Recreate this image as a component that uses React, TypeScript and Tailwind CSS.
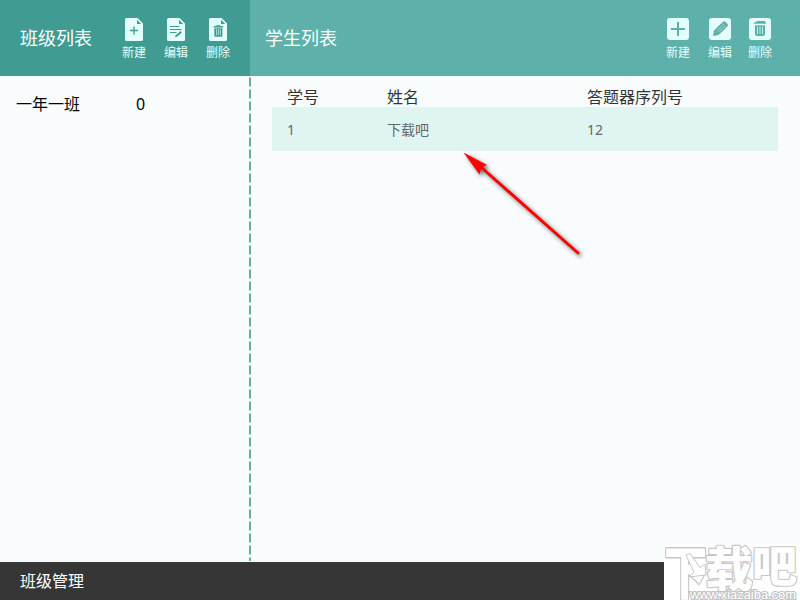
import type { ReactNode } from "react";

type ToolButtonProps = {
  label: string;
  children: ReactNode;
};

const ToolButton = ({ label, children }: ToolButtonProps) => (
  <button
    type="button"
    className="flex w-6 flex-col items-center whitespace-nowrap text-xs leading-4 text-[#e4fffb]"
  >
    <span className="flex h-[27px] items-start">{children}</span>
    {label}
  </button>
);

const FileShape = ({ children }: { children: ReactNode }) => (
  <svg width="20" height="23" viewBox="0 0 20 23" fill="none">
    <path
      d="M2.5 0H13.5L19 5.5V21.5a1.5 1.5 0 0 1-1.5 1.5H2.5a1.5 1.5 0 0 1-1.5-1.5V1.5a1.5 1.5 0 0 1 1.5-1.5Z"
      fill="#e4fffb"
    />
    <path d="M13 1.8V6h4.2Z" fill="#409c92" />
    {children}
  </svg>
);

const FileAddIcon = () => (
  <FileShape>
    <path d="M10 8.5v8M6 12.5h8" stroke="#409c92" strokeWidth="1.4" />
  </FileShape>
);

const FileEditIcon = () => (
  <FileShape>
    <path
      d="M4 8.5h9.5M4 11.5h11.5M4 14.5h6.5"
      stroke="#409c92"
      strokeWidth="1.1"
    />
    <path d="M9 19.3l.8-2 4.7-4.2 1.4 1.4-4.8 4.2Z" fill="#409c92" />
  </FileShape>
);

const FileDeleteIcon = () => (
  <FileShape>
    <path
      d="M8.3 8V7.2h3.9V8h2.9v1.6H5.5V8ZM6.3 10.3h8.1v7.2a1.2 1.2 0 0 1-1.2 1.2H7.5a1.2 1.2 0 0 1-1.2-1.2Z"
      fill="#409c92"
    />
    <path d="M8.5 11.2v6M10.4 11.2v6M12.3 11.2v6" stroke="#a9dad2" />
  </FileShape>
);

const SquareShape = ({ children }: { children: ReactNode }) => (
  <svg width="22" height="22" viewBox="0 0 22 22" fill="none">
    <rect width="22" height="22" rx="3" fill="#e4fffb" />
    {children}
  </svg>
);

const AddIcon = () => (
  <SquareShape>
    <path d="M11 4v14M4 11h14" stroke="#5eb1ab" strokeWidth="2" />
  </SquareShape>
);

const EditIcon = () => (
  <SquareShape>
    <path
      d="M4 18L5 12.5 13.8 3.8a2 2 0 0 1 2.6 0l2 2a2 2 0 0 1 0 2.6L9.6 17Z"
      fill="#5eb1ab"
    />
    <path
      d="M12.2 4.8l5.2 5.2M7.8 13l5-5M9.7 14.2l5-5"
      stroke="#b4e2db"
      strokeWidth="0.8"
    />
  </SquareShape>
);

const DeleteIcon = () => (
  <SquareShape>
    <path d="M7.5 3H16v1.2h1v1.6H5V4.2h2.5Z" fill="#5eb1ab" />
    <path d="M6 7.2h10v8.8a2 2 0 0 1-2 2H8a2 2 0 0 1-2-2Z" fill="#5eb1ab" />
    <path d="M8.5 8.5v7.5M11 8.5v7.5M13.5 8.5v7.5" stroke="#c2ebe4" />
  </SquareShape>
);

const columns = ["学号", "姓名", "答题器序列号"];
const students = [["1", "下载吧", "12"]];

const Pointer = () => (
  <svg
    className="pointer-events-none absolute left-[450px] top-[140px]"
    width="145"
    height="130"
    viewBox="0 0 145 130"
  >
    <g className="drop-shadow-[2px_2px_2px_rgba(0,0,0,0.6)]">
      <path
        d="M32 28L128 113"
        stroke="#ff0000"
        strokeWidth="3"
        strokeLinecap="round"
      />
      <path d="M13.5 12.5L37 25 31.5 27.5 29.5 34.5Z" fill="#ff0000" />
    </g>
  </svg>
);

const Watermark = () => (
  <svg
    className="absolute bottom-0 right-0"
    width="136"
    height="56"
    viewBox="0 0 136 56"
  >
    <rect width="136" height="56" fill="#ffffff" />
    <g
      fontFamily="'Noto Sans CJK SC', sans-serif"
      fontSize="40"
      fontWeight="900"
      fill="#ffffff"
      stroke="#c6c6c6"
      strokeWidth="2"
      strokeLinejoin="round"
      paintOrder="stroke"
    >
      <text transform="translate(0 50) scale(1.08 1.46)">下</text>
      <text transform="translate(41 42) scale(1.2 1.16)">载</text>
      <text transform="translate(88 38) scale(1.13 1.08)">吧</text>
    </g>
    <path
      d="M22 11l4-1.500 10 14 5-3.500 1 11-17 2 5-4.500Z"
      fill="#ffffff"
      stroke="#c6c6c6"
      strokeLinejoin="round"
    />
    <text
      x="26"
      y="54.5"
      fontFamily="'Liberation Sans', Arial, sans-serif"
      fontSize="12"
      textLength="106"
      lengthAdjust="spacingAndGlyphs"
      fill="#ffffff"
      stroke="#c2c2c2"
      strokeWidth="2.2"
      paintOrder="stroke"
    >
      www.xiazaiba.com
    </text>
  </svg>
);

const ClassManagePage = () => {
  return (
    <div className="relative flex h-[600px] w-[800px] flex-col overflow-hidden bg-[#f8fcfd] font-['Noto_Sans','Noto_Sans_CJK_SC',sans-serif]">
      <header className="flex h-[76px] shrink-0 text-white">
        <div className="flex w-[250px] bg-[#409c92] pl-5">
          <h1 className="w-[102px] self-center text-lg leading-7">班级列表</h1>
          <div className="flex gap-[18px] pt-[18px]">
            <ToolButton label="新建">
              <FileAddIcon />
            </ToolButton>
            <ToolButton label="编辑">
              <FileEditIcon />
            </ToolButton>
            <ToolButton label="删除">
              <FileDeleteIcon />
            </ToolButton>
          </div>
        </div>
        <div className="flex flex-1 justify-between bg-[#5eb1ab] pl-[15px] pr-7">
          <h1 className="self-center text-lg leading-7">学生列表</h1>
          <div className="flex pt-[18px]">
            <ToolButton label="新建">
              <AddIcon />
            </ToolButton>
            <div className="ml-[18px] mr-4">
              <ToolButton label="编辑">
                <EditIcon />
              </ToolButton>
            </div>
            <ToolButton label="删除">
              <DeleteIcon />
            </ToolButton>
          </div>
        </div>
      </header>

      <div className="flex flex-1">
        <aside className="w-[249px] pl-4 pt-4">
          <div className="flex text-base leading-6 text-black">
            <span className="w-[120px]">一年一班</span>
            <span>0</span>
          </div>
        </aside>
        <div className="mb-px mt-px w-0.5 bg-[repeating-linear-gradient(to_bottom,#a9d6d3_0px,#a9d6d3_1px,#5eb1ab_1px,#5eb1ab_9px,#a9d6d3_9px,#a9d6d3_10px,transparent_10px,transparent_12px)]" />
        <main className="flex-1 pl-[21px] pr-[22px] pt-[9px]">
          <div className="grid h-[22px] grid-cols-[100px_200px_1fr] pl-[15px] text-base leading-6 text-[#333]">
            {columns.map((column) => (
              <span key={column}>{column}</span>
            ))}
          </div>
          {students.map((student) => (
            <div
              key={student[0]}
              className="grid h-11 grid-cols-[100px_200px_1fr] items-center bg-[#e0f5f2] pl-[15px] pt-0.5 text-sm text-[#666]"
            >
              {student.map((cell) => (
                <span key={cell}>{cell}</span>
              ))}
            </div>
          ))}
        </main>
      </div>

      <footer className="flex h-[38px] shrink-0 items-center bg-[#363636] pl-5 text-base text-white">
        班级管理
      </footer>

      <Pointer />
      <Watermark />
    </div>
  );
};

export default ClassManagePage;
